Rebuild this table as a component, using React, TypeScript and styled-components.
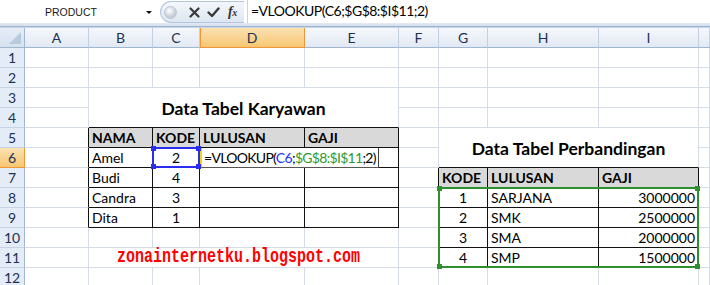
import React from 'react';
import styled, { createGlobalStyle } from 'styled-components';

const Global = createGlobalStyle`
  html, body { margin: 0; padding: 0; background: #fff; overflow: hidden; }
  body { width: 710px; height: 285px; font-family: Lato, "Liberation Sans", sans-serif; }
  *, *::before, *::after { box-sizing: border-box; }
`;

const Window = styled.div`
  width: 710px;
  height: 285px;
  overflow: hidden;
  display: flex;
  flex-direction: column;
  background: #fff;
`;

const FormulaBar = styled.div`
  display: flex;
  align-items: flex-start;
  height: 28px;
  flex-shrink: 0;
  background: linear-gradient(#ffffff 0, #ffffff 23px, #e3eaf4 23px, #d3deec 26px, #9fb5d0 26px, #9fb5d0 27px, #c9d6e8 27px);
`;

const NameBox = styled.div`
  width: 157px;
  height: 23px;
  display: flex;
  align-items: center;
  background: #fff;
`;

const NameText = styled.span`
  flex: 1;
  text-align: center;
  font-family: "Liberation Sans", Arial, sans-serif;
  font-size: 10.5px;
  color: #1a1a1a;
  padding-left: 2px;
`;

const DropArrow = styled.span`
  width: 0;
  height: 0;
  border-left: 3px solid transparent;
  border-right: 3px solid transparent;
  border-top: 3px solid #111;
  margin: 1px 5px 0 6px;
`;

const ButtonGroup = styled.div`
  margin: 1px 0 0 3px;
  width: 84px;
  height: 22px;
  border: 1px solid #b4c6de;
  border-right: none;
  border-radius: 11px 0 0 11px;
  background: linear-gradient(#f4f7fc, #dde6f2);
  display: flex;
  align-items: center;
  padding-left: 3px;
`;

const RoundBtn = styled.span`
  width: 13px;
  height: 13px;
  border-radius: 50%;
  background: radial-gradient(circle at 40% 35%, #ffffff 0, #d6dbe2 45%, #aab3bf 100%);
  border: 1px solid #c0c8d4;
  margin-right: 8px;
`;

const IconSlot = styled.span`
  width: 19px;
  height: 20px;
  display: flex;
  align-items: center;
  justify-content: center;
`;

const Fx = styled.span`
  font-family: "Liberation Serif", "DejaVu Serif", serif;
  font-style: italic;
  font-weight: bold;
  font-size: 14px;
  color: #333;
  margin-left: 5px;
  letter-spacing: -0.5px;
  & small { font-size: 10px; }
`;

const FormulaInput = styled.div`
  flex: 1;
  height: 23px;
  margin-left: 3px;
  border-left: 1px solid #c5d3e6;
  background: #fff;
  font-size: 14px;
  letter-spacing: -0.5px;
  line-height: 22px;
  padding-left: 3px;
  color: #000;
  white-space: nowrap;
`;

const Sheet = styled.div`
  display: grid;
  grid-template-columns: 25px 64px 64px 47px 105px 94px 40px 49px 111px 100px 11px;
  grid-template-rows: 20px repeat(12, 20px);
  flex-shrink: 0;
`;

const Corner = styled.div`
  grid-column: 1;
  grid-row: 1;
  position: relative;
  background: linear-gradient(#e6edf7, #d6e1ef);
  border-right: 1px solid #9eb6ce;
  border-bottom: 1px solid #9eb6ce;
  &::after {
    content: '';
    position: absolute;
    right: 3px;
    bottom: 3px;
    border-left: 12px solid transparent;
    border-bottom: 12px solid #b9c9dd;
  }
`;

const ColHeader = styled.div<{ $active?: boolean }>`
  display: flex;
  align-items: center;
  justify-content: center;
  font-size: 14px;
  color: #1d3253;
  background: ${(p) => (p.$active ? 'linear-gradient(#fbe1b2, #f6c772)' : 'linear-gradient(#f5f8fc, #e2e9f4)')};
  border-right: 1px solid ${(p) => (p.$active ? '#f29536' : '#c3d0e1')};
  border-bottom: 1px solid ${(p) => (p.$active ? '#f29536' : '#9eb6ce')};
  ${(p) => (p.$active ? 'box-shadow: inset 1px 0 0 #f29536;' : '')}
`;

const RowHeader = styled.div<{ $active?: boolean }>`
  grid-column: 1;
  display: flex;
  align-items: center;
  justify-content: center;
  font-size: 14px;
  color: #1d3253;
  background: ${(p) => (p.$active ? 'linear-gradient(#fbe1b2, #f6c772)' : '#e4ecf7')};
  border-right: 1px solid ${(p) => (p.$active ? '#f29536' : '#9eb6ce')};
  border-bottom: 1px solid ${(p) => (p.$active ? '#f29536' : '#c5d3e5')};
`;

type Kind = 'title' | 'head' | 'text' | 'center' | 'right' | 'brand' | 'empty';

const Cell = styled.div<{ $right: string; $bottom: string; $kind: Kind }>`
  display: flex;
  align-items: center;
  overflow: visible;
  white-space: nowrap;
  padding: 0 3px;
  font-size: 14px;
  color: #000;
  background: ${(p) => (p.$kind === 'head' ? '#d9d9d9' : '#fff')};
  border-right: 1px solid ${(p) => p.$right};
  border-bottom: 1px solid ${(p) => p.$bottom};
  font-weight: ${(p) => (p.$kind === 'head' || p.$kind === 'title' ? 700 : 400)};
  justify-content: ${(p) =>
    p.$kind === 'title' || p.$kind === 'center' || p.$kind === 'brand'
      ? 'center'
      : p.$kind === 'right'
      ? 'flex-end'
      : 'flex-start'};
  ${(p) => (p.$kind === 'title' ? 'font-size: 17.5px; padding-top: 1px;' : '')}
`;

const Brand = styled.span`
  font-family: "Liberation Mono", "Courier New", monospace;
  font-weight: 700;
  font-size: 15px;
  color: #ff0000;
  display: inline-block;
  transform: scaleY(1.3);
  margin-right: 10px;
`;

const EditBox = styled.div`
  grid-column: 5 / span 2;
  grid-row: 7;
  justify-self: start;
  width: 179px;
  z-index: 2;
  background: #fff;
  border-right: 1px solid #444;
  border-bottom: 1px solid #555;
  border-left: 2px solid #f0d800;
  font-size: 14px;
  letter-spacing: -0.7px;
  line-height: 19px;
  padding-left: 2px;
  white-space: nowrap;
  color: #000;
`;

const RefBlue = styled.span` color: #2233ff; `;
const RefGreen = styled.span` color: #2e9a2e; `;

const RangeBox = styled.div<{ $color: string; $col: string; $row: string }>`
  grid-column: ${(p) => p.$col};
  grid-row: ${(p) => p.$row};
  position: relative;
  z-index: 3;
  margin: -1px 0 0 -1px;
  border: 2px solid ${(p) => p.$color};
  pointer-events: none;
`;

const Handle = styled.span<{ $color: string; $pos: 'tl' | 'tr' | 'bl' | 'br' }>`
  position: absolute;
  width: 5px;
  height: 5px;
  background: ${(p) => p.$color};
  ${(p) => (p.$pos[0] === 't' ? 'top: -3px;' : 'bottom: -3px;')}
  ${(p) => (p.$pos[1] === 'l' ? 'left: -3px;' : 'right: -3px;')}
`;

const COLS = ['A', 'B', 'C', 'D', 'E', 'F', 'G', 'H', 'I', 'J'];
const ROWS = Array.from({ length: 12 }, (_, i) => i + 1);

const TABLES = [
  { c1: 2, c2: 5, r1: 5, r2: 9 },
  { c1: 7, c2: 9, r1: 7, r2: 11 },
];
const inTable = (c: number, r: number) => TABLES.some((t) => c >= t.c1 && c <= t.c2 && r >= t.r1 && r <= t.r2);

type Def = { kind: Kind; text?: React.ReactNode; cs?: number; rs?: number };

const DEFS: Record<string, Def> = {
  '2,3': { kind: 'title', text: 'Data Tabel Karyawan', cs: 4, rs: 2 },
  '2,5': { kind: 'head', text: 'NAMA' },
  '3,5': { kind: 'head', text: 'KODE' },
  '4,5': { kind: 'head', text: 'LULUSAN' },
  '5,5': { kind: 'head', text: 'GAJI' },
  '2,6': { kind: 'text', text: 'Amel' },
  '3,6': { kind: 'center', text: '2' },
  '2,7': { kind: 'text', text: 'Budi' },
  '3,7': { kind: 'center', text: '4' },
  '2,8': { kind: 'text', text: 'Candra' },
  '3,8': { kind: 'center', text: '3' },
  '2,9': { kind: 'text', text: 'Dita' },
  '3,9': { kind: 'center', text: '1' },
  '7,5': { kind: 'title', text: 'Data Tabel Perbandingan', cs: 3, rs: 2 },
  '7,7': { kind: 'head', text: 'KODE' },
  '8,7': { kind: 'head', text: 'LULUSAN' },
  '9,7': { kind: 'head', text: 'GAJI' },
  '7,8': { kind: 'center', text: '1' },
  '8,8': { kind: 'text', text: 'SARJANA' },
  '9,8': { kind: 'right', text: '3000000' },
  '7,9': { kind: 'center', text: '2' },
  '8,9': { kind: 'text', text: 'SMK' },
  '9,9': { kind: 'right', text: '2500000' },
  '7,10': { kind: 'center', text: '3' },
  '8,10': { kind: 'text', text: 'SMA' },
  '9,10': { kind: 'right', text: '2000000' },
  '7,11': { kind: 'center', text: '4' },
  '8,11': { kind: 'text', text: 'SMP' },
  '9,11': { kind: 'right', text: '1500000' },
  '2,11': { kind: 'brand', text: <Brand>zonainternetku.blogspot.com</Brand>, cs: 4 },
};

const GRID = '#d5dce8';
const BLACK = '#111';

function buildCells() {
  const covered = new Set<string>();
  Object.entries(DEFS).forEach(([k, d]) => {
    const [c, r] = k.split(',').map(Number);
    for (let i = 0; i < (d.cs || 1); i++)
      for (let j = 0; j < (d.rs || 1); j++) if (i || j) covered.add(`${c + i},${r + j}`);
  });
  const out: React.ReactNode[] = [];
  ROWS.forEach((r) => {
    COLS.forEach((_, ci) => {
      const c = ci + 1;
      const key = `${c},${r}`;
      if (covered.has(key)) return;
      const d: Def = DEFS[key] || { kind: 'empty' };
      const cs = d.cs || 1;
      const rs = d.rs || 1;
      const lastC = c + cs - 1;
      const lastR = r + rs - 1;
      let right = false;
      for (let rr = r; rr <= lastR; rr++) if (inTable(lastC, rr) || inTable(lastC + 1, rr)) right = true;
      let bottom = false;
      for (let cc = c; cc <= lastC; cc++) if (inTable(cc, lastR) || inTable(cc, lastR + 1)) bottom = true;
      out.push(
        <Cell
          key={key}
          $kind={d.kind}
          $right={right ? BLACK : GRID}
          $bottom={bottom ? BLACK : GRID}
          style={{ gridColumn: `${c + 1} / span ${cs}`, gridRow: `${r + 1} / span ${rs}` }}
        >
          {d.text}
        </Cell>
      );
    });
  });
  return out;
}

const XIcon = () => (
  <svg width="11" height="11" viewBox="0 0 11 11">
    <path d="M1.5 1.5 L9.5 9.5 M9.5 1.5 L1.5 9.5" stroke="#3a3a3a" strokeWidth="2.2" strokeLinecap="round" />
  </svg>
);

const CheckIcon = () => (
  <svg width="13" height="11" viewBox="0 0 13 11">
    <path d="M1.5 5.5 L5 9 L11.5 1.5" stroke="#3a3a3a" strokeWidth="2.4" fill="none" strokeLinecap="round" strokeLinejoin="round" />
  </svg>
);

export default function App() {
  return (
    <Window>
      <Global />
      <FormulaBar>
        <NameBox>
          <NameText>PRODUCT</NameText>
          <DropArrow />
        </NameBox>
        <ButtonGroup>
          <RoundBtn />
          <IconSlot>
            <XIcon />
          </IconSlot>
          <IconSlot>
            <CheckIcon />
          </IconSlot>
          <Fx>
            f<small>x</small>
          </Fx>
        </ButtonGroup>
        <FormulaInput>=VLOOKUP(C6;$G$8:$I$11;2)</FormulaInput>
      </FormulaBar>
      <Sheet>
        <Corner />
        {COLS.map((l, i) => (
          <ColHeader key={l} $active={l === 'D'} style={{ gridColumn: i + 2, gridRow: 1 }}>
            {l === 'J' ? null : l}
          </ColHeader>
        ))}
        {ROWS.map((r) => (
          <RowHeader key={r} $active={r === 6} style={{ gridRow: r + 1 }}>
            {r}
          </RowHeader>
        ))}
        {buildCells()}
        <EditBox>
          =VLOOKUP(<RefBlue>C6</RefBlue>;<RefGreen>$G$8:$I$11</RefGreen>;2)
        </EditBox>
        <RangeBox $color="#2a2cf0" $col="4" $row="7">
          <Handle $color="#2a2cf0" $pos="tl" />
          <Handle $color="#2a2cf0" $pos="tr" />
          <Handle $color="#2a2cf0" $pos="bl" />
          <Handle $color="#2a2cf0" $pos="br" />
        </RangeBox>
        <RangeBox $color="#2f8f2f" $col="8 / span 3" $row="9 / span 4">
          <Handle $color="#2f8f2f" $pos="tl" />
          <Handle $color="#2f8f2f" $pos="tr" />
          <Handle $color="#2f8f2f" $pos="bl" />
          <Handle $color="#2f8f2f" $pos="br" />
        </RangeBox>
      </Sheet>
    </Window>
  );
}
